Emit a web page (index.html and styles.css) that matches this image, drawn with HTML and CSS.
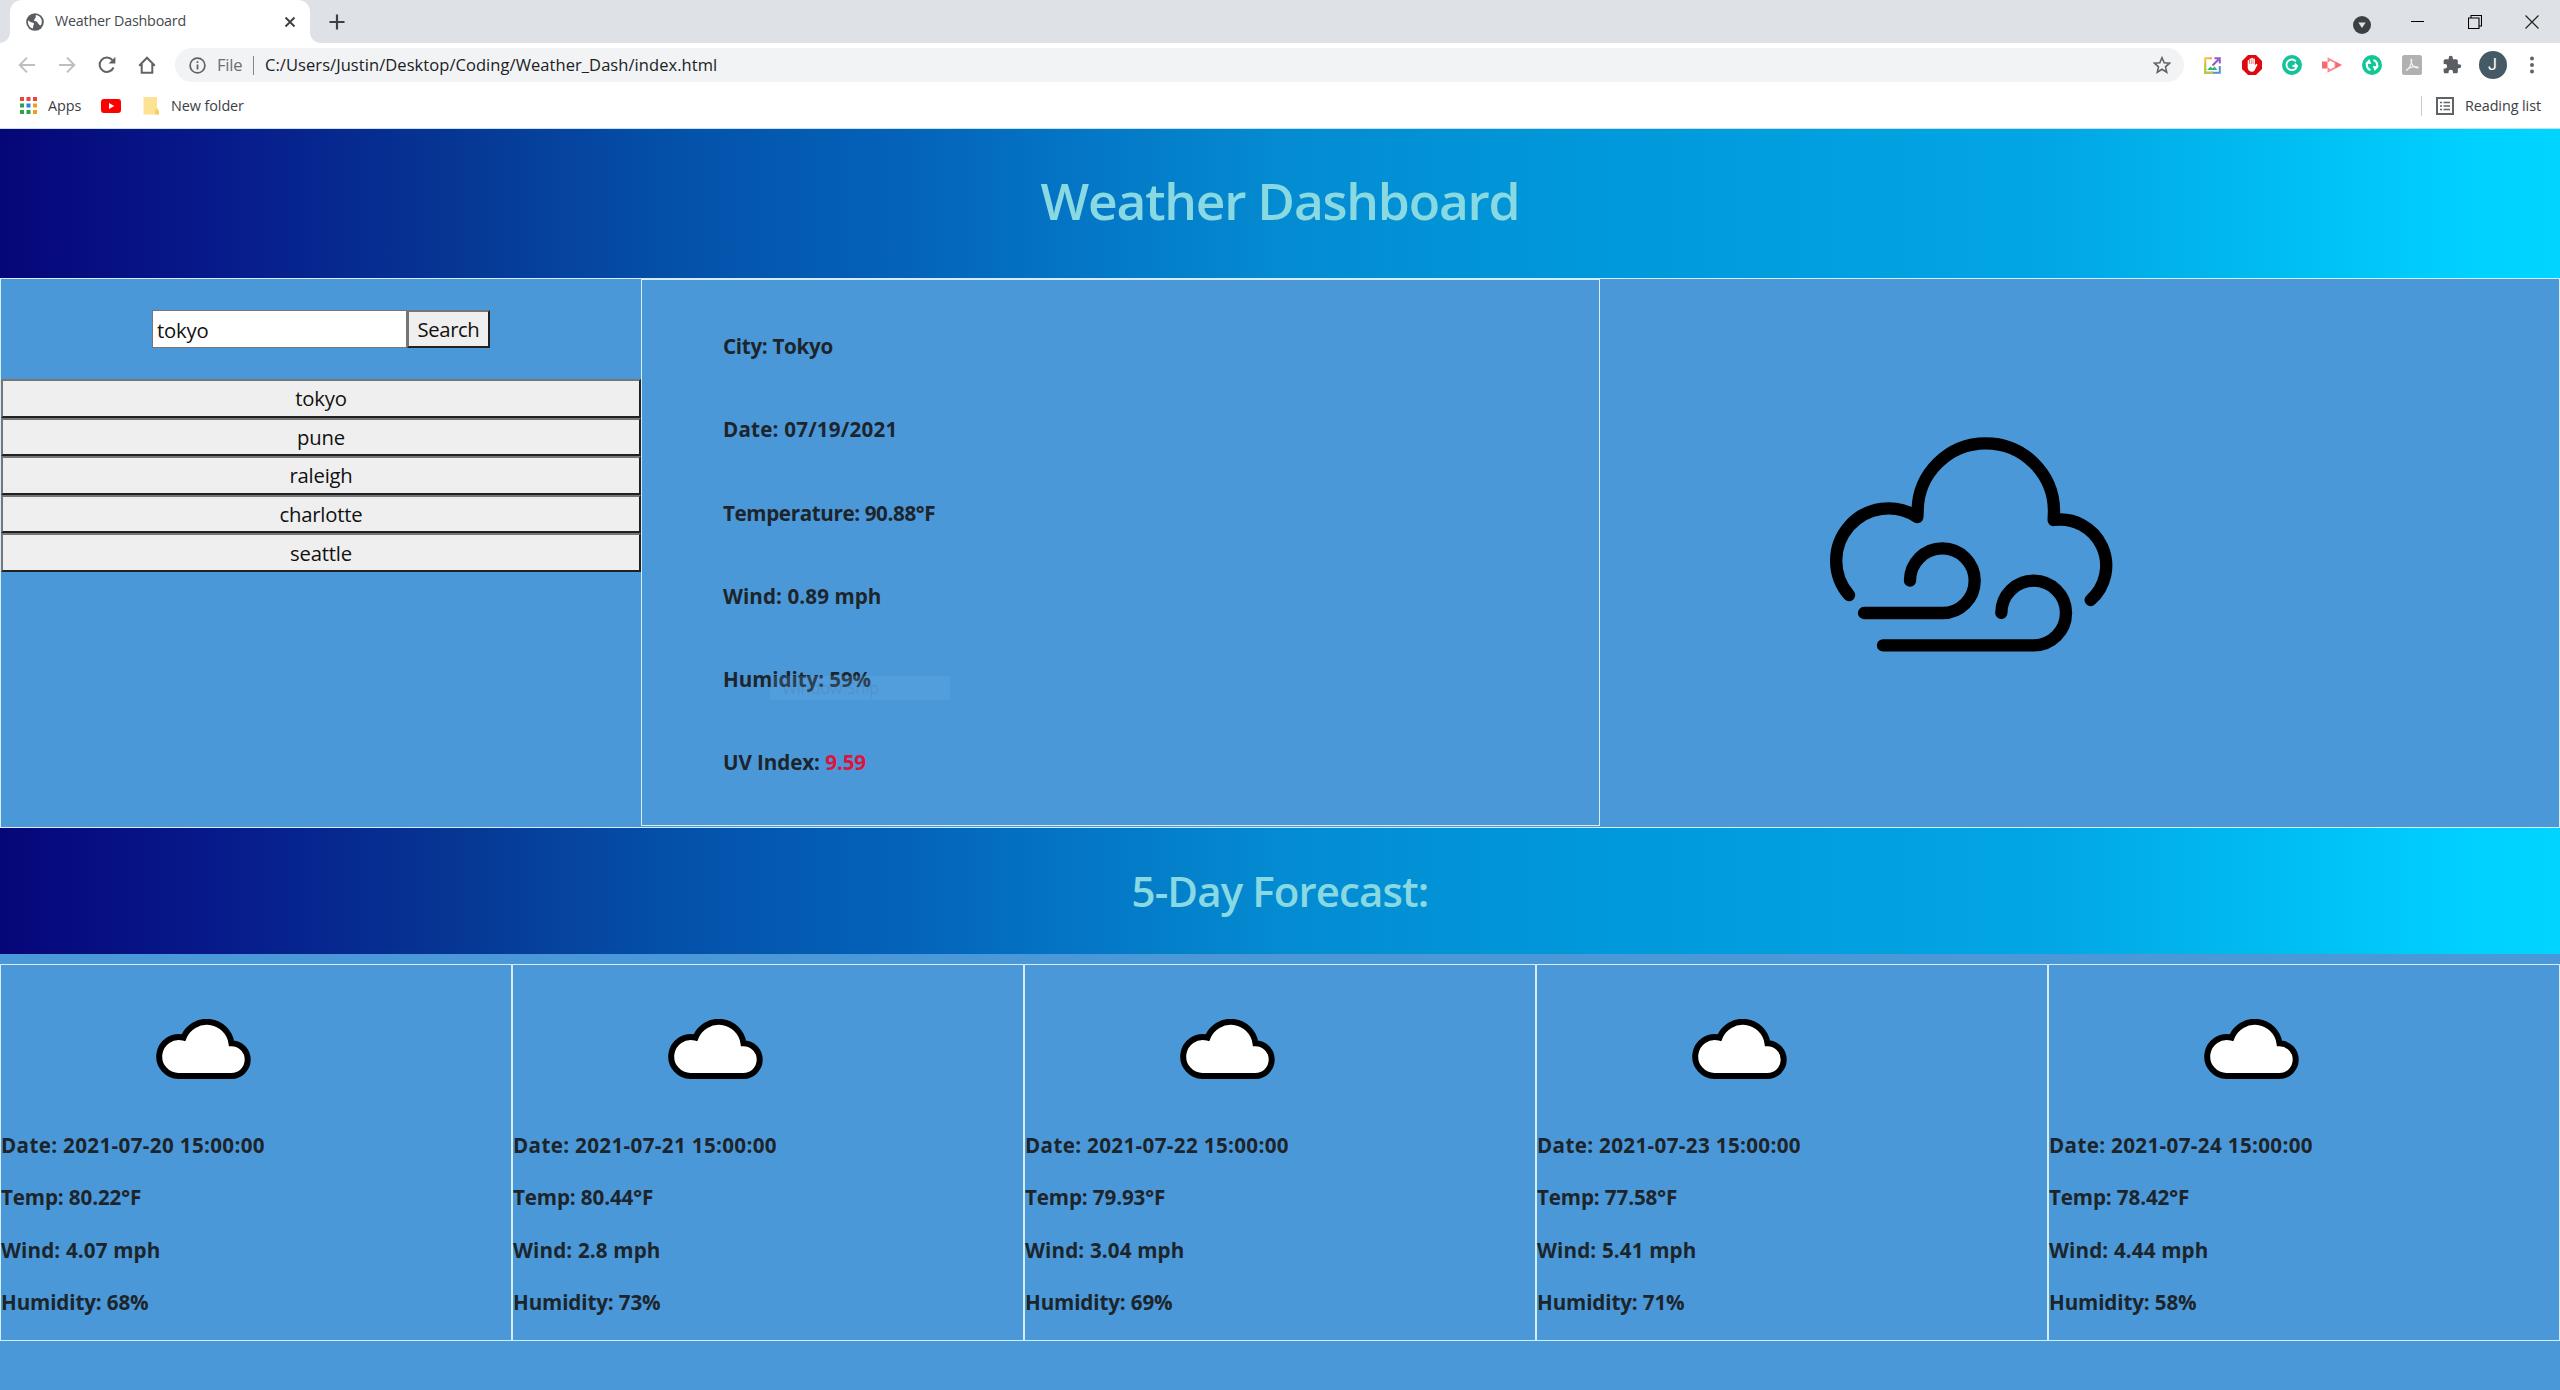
FILE: index.html
```html
<!DOCTYPE html>
<html lang="en">
<head>
<meta charset="utf-8">
<title>Weather Dashboard</title>
<link rel="stylesheet" href="styles.css">
</head>
<body>
<svg class="defs" width="0" height="0">
  <symbol id="cloud" viewBox="0 0 94 60">
    <path d="M22.500 57A19.500 19.500 0 1 1 27 18.600A25 25 0 0 1 75 24.300A16.300 16.300 0 0 1 74.700 57Z" fill="#fff" stroke="#000" stroke-width="6"/>
  </symbol>
</svg>

<div class="tabbar">
  <div class="tab">
    <svg class="globe" width="18" height="18" viewBox="0 0 18 18"><circle cx="9" cy="9" r="8.8" fill="#5a5d61"/><path d="M2 7.500C3.500 8 4.500 9.500 6 9.500C8 9.500 8.500 11 7.500 12C7 13 7.500 14.500 6.500 15.500C3.500 14.500 1.600 11.500 2 7.500ZM10 2C9 3 10.500 4.300 9.300 5.200C8 5.800 8.800 7.300 7.800 8C9.500 8.300 11 8 11.500 9.600C11.800 11 13 10.800 13.300 12C14 12.400 14.600 12.300 15 12.200C17.200 8 15 2.800 10 2Z" fill="#fff"/></svg>
    <span class="tab-title">Weather Dashboard</span>
    <svg class="tab-close" width="12" height="12" viewBox="0 0 12 12"><path d="M1.500 1.500L10.500 10.500M10.500 1.500L1.500 10.500" stroke="#3c4043" stroke-width="1.900"/></svg>
  </div>
  <svg class="plus" width="16" height="16" viewBox="0 0 16 16"><path d="M8 .5V15.500M.5 8H15.500" stroke="#3c4043" stroke-width="2.200"/></svg>
  <div class="window-controls">
    <div class="wc-cell wc-drop"><svg width="18" height="18" viewBox="0 0 18 18"><circle cx="9" cy="9" r="9" fill="#3c4043"/><path d="M5.300 6.500H12.700L9 12Z" fill="#dee1e6"/></svg></div>
    <div class="wc-cell"><svg width="13" height="13" viewBox="0 0 13 13"><path d="M0 6.500H13" stroke="#000" stroke-width="1"/></svg></div>
    <div class="wc-cell"><svg width="14" height="14" viewBox="0 0 14 14"><path d="M.5 3H11V13.500H.5ZM3 3V.5H13.500V11H11" fill="none" stroke="#000" stroke-width="1.100"/></svg></div>
    <div class="wc-cell"><svg width="14" height="14" viewBox="0 0 14 14"><path d="M.5 .5L13.500 13.500M13.500 .5L.5 13.500" stroke="#222" stroke-width="1.200"/></svg></div>
  </div>
</div>

<div class="toolbar">
  <div class="cell"><svg width="18" height="18" viewBox="0 0 18 18"><path d="M17 9H2M9 1.700L1.700 9L9 16.300" fill="none" stroke="#bcbec1" stroke-width="1.900"/></svg></div>
  <div class="cell"><svg width="18" height="18" viewBox="0 0 18 18"><path d="M1 9H16M9 1.700L16.300 9L9 16.300" fill="none" stroke="#bcbec1" stroke-width="1.900"/></svg></div>
  <div class="cell"><svg width="18" height="18" viewBox="0 0 18 18"><path d="M15.500 11.500A7.200 7.200 0 1 1 14.300 4" fill="none" stroke="#5f6368" stroke-width="2"/><path d="M17.400 .8V7.600H10.600Z" fill="#5f6368"/></svg></div>
  <div class="cell"><svg width="18" height="18" viewBox="0 0 18 18"><path d="M1.200 9.700L9 1.700L16.800 9.700M3.700 8V16.700H14.300V8" fill="none" stroke="#5f6368" stroke-width="2"/></svg></div>
  <div class="omnibox">
    <svg width="17" height="17" viewBox="0 0 17 17"><circle cx="8.500" cy="8.500" r="7.400" fill="none" stroke="#5f6368" stroke-width="1.700"/><path d="M8.500 7.600V12.500M8.500 4.300V6.100" stroke="#5f6368" stroke-width="1.800"/></svg>
    <span class="scheme">File</span>
    <span class="divider"></span>
    <span class="url">C:/Users/Justin/Desktop/Coding/Weather_Dash/index.html</span>
    <svg class="star" width="18" height="18" viewBox="0 0 18 18"><path d="M9 1.700L11.200 6.700L16.600 7.200L12.500 10.800L13.700 16.200L9 13.300L4.300 16.200L5.500 10.800L1.400 7.200L6.800 6.700Z" fill="none" stroke="#5f6368" stroke-width="1.600"/></svg>
  </div>
  <div class="ext">
    <div class="cell"><svg width="17" height="17" viewBox="0 0 17 17"><defs><linearGradient id="rb" x1="0" y1="0" x2="1" y2="1"><stop offset="0" stop-color="#f5c93a"/><stop offset=".4" stop-color="#e8855e"/><stop offset=".65" stop-color="#9a6ac8"/><stop offset="1" stop-color="#3b9be0"/></linearGradient></defs><path d="M8 1.200H1.200V15.800H15.800V9" fill="none" stroke="url(#rb)" stroke-width="2"/><path d="M1.200 7V15.800H9" fill="none" stroke="#b7cf3c" stroke-width="2"/><path d="M3 13L6.500 9.500L8.500 11.500L10.500 9.500L13.500 13Z" fill="#35b56a"/><path d="M8.500 8.500L14.500 2.500M10.500 1.200H15.800V6.500" fill="none" stroke="#8e5cc9" stroke-width="2"/></svg></div>
    <div class="cell"><svg width="20" height="20" viewBox="0 0 20 20"><path d="M6 0H14L20 6V14L14 20H6L0 14V6Z" fill="#e0080f"/><path d="M5.700 9.500V6A.9 .9 0 0 1 7.500 6V4.300A.9 .9 0 0 1 9.300 4.300V3.600A.9 .9 0 0 1 11.100 3.600V4.500A.9 .9 0 0 1 12.900 4.500V10.500L13.700 9.200A.9 .9 0 0 1 15.200 10.200L12.500 15.500Q11.500 16.700 10 16.700Q6.500 16.700 5.700 13Z" fill="#fff"/><path d="M7.500 5V9M9.300 4.500V9M11.100 4.500V9" stroke="#e0080f" stroke-width=".5"/></svg></div>
    <div class="cell"><svg width="20" height="20" viewBox="0 0 20 20"><circle cx="10" cy="10" r="10" fill="#15c39a"/><path d="M13.800 6.300A5.300 5.300 0 1 0 15 11H10.500M12.800 8.700L15 11L13.300 13.500" fill="none" stroke="#fff" stroke-width="1.800"/></svg></div>
    <div class="cell"><svg width="20" height="16" viewBox="0 0 20 16"><path d="M0 4.500H5.500V11.500H0Z" fill="#f46b6f"/><path d="M6.500 5V1.800L13.500 5.500V10.500L6.500 14.200V11" fill="none" stroke="#f88b8e" stroke-width="1.900"/><path d="M13.500 4.500L20 8L13.500 11.500Z" fill="#f46b6f"/></svg></div>
    <div class="cell"><svg width="20" height="20" viewBox="0 0 20 20"><circle cx="10" cy="10" r="10" fill="#11c795"/><path d="M8.500 15A5.300 5.300 0 0 1 5.500 7.200M11.500 5A5.300 5.300 0 0 1 14.500 12.800" fill="none" stroke="#fff" stroke-width="2.200"/><path d="M3.300 8.500L9.300 9L7.300 4ZM16.700 11.500L10.700 11L12.700 16Z" fill="#fff"/></svg></div>
    <div class="cell"><svg width="20" height="20" viewBox="0 0 20 20"><rect width="20" height="20" rx="2.500" fill="#b1b1b1"/><path d="M4 15.500C7 14.500 10.300 8.500 9.700 4.500C8.800 3.800 8.600 5.500 9.500 8C10.600 11 13.500 13.500 16.300 12.800C16 10.800 8.500 10.800 4 15.500Z" fill="none" stroke="#f2f2f2" stroke-width="1.100"/></svg></div>
    <div class="cell"><svg width="20" height="20" viewBox="0 0 24 24"><path d="M20.500 11H19V7c0-1.100-.9-2-2-2h-4V3.500a2.500 2.500 0 0 0-5 0V5H4c-1.100 0-2 .9-2 2v3.800h1.500a2.700 2.700 0 0 1 0 5.400H2V20c0 1.100.9 2 2 2h3.800v-1.500a2.700 2.700 0 0 1 5.400 0V22H17c1.100 0 2-.9 2-2v-4h1.500a2.500 2.500 0 0 0 0-5z" fill="#5a5d61"/></svg></div>
    <div class="cell avatar-cell"><span class="avatar">J</span></div>
    <div class="cell menu-cell"><svg width="6" height="18" viewBox="0 0 6 18"><g fill="#5f6368"><circle cx="3" cy="2.500" r="2"/><circle cx="3" cy="9" r="2"/><circle cx="3" cy="15.500" r="2"/></g></svg></div>
  </div>
</div>

<div class="bookmarks">
  <svg class="apps" width="17" height="17" viewBox="0 0 17 17"><g fill="#e8453c"><rect width="4" height="4"/><rect x="6.500" width="4" height="4"/><rect x="13" width="4" height="4"/></g><rect y="6.500" width="4" height="4" fill="#2ba24c"/><rect x="6.500" y="6.500" width="4" height="4" fill="#1e88e5"/><rect x="13" y="6.500" width="4" height="4" fill="#f29d1c"/><rect y="13" width="4" height="4" fill="#2ba24c"/><rect x="6.500" y="13" width="4" height="4" fill="#2ba24c"/><rect x="13" y="13" width="4" height="4" fill="#f29d1c"/></svg>
  <span class="bm-apps">Apps</span>
  <svg class="youtube" width="20" height="14" viewBox="0 0 20 14"><rect width="20" height="14" rx="3" fill="#f00"/><path d="M8 4L13.300 7L8 10Z" fill="#fff"/></svg>
  <svg class="folder" width="17" height="18" viewBox="0 0 17 18"><path d="M.5 0H14V13L16 17.500H.5Z" fill="#fde293"/><path d="M12 17.500V13.500L14 11L16 14V17.500Z" fill="#f4cf63"/></svg>
  <span class="bm-folder">New folder</span>
  <div class="reading">
    <svg width="18" height="18" viewBox="0 0 18 18"><rect x="1" y="1" width="16" height="16" fill="none" stroke="#5f6368" stroke-width="2"/><path d="M4 5.500H6M4 9H6M4 12.500H6M7.500 5.500H14M7.500 9H14M7.500 12.500H14" stroke="#5f6368" stroke-width="1.600"/></svg>
    <span>Reading list</span>
  </div>
</div>

<header class="banner title-banner"><h1>Weather Dashboard</h1></header>

<main class="overview">
  <section class="search-panel">
    <form class="search-form">
      <input class="search-input" type="text" value="tokyo">
      <button class="search-button" type="button">Search</button>
    </form>
    <div class="history">
      <button type="button">tokyo</button>
      <button type="button">pune</button>
      <button type="button">raleigh</button>
      <button type="button">charlotte</button>
      <button type="button">seattle</button>
    </div>
  </section>
  <section class="current">
    <p class="city">City: Tokyo</p>
    <p class="date">Date: 07/19/2021</p>
    <p class="temp">Temperature: 90.88°F</p>
    <p class="wind">Wind: 0.89 mph</p>
    <p>Humidity: 59%</p>
    <p>UV Index: <span class="uv">9.59</span></p>
    <div class="fading-tip">Window Snip</div>
  </section>
  <section class="current-icon">
    <svg width="400" height="280" viewBox="0 0 1200 840"><g fill="none" stroke="#000" stroke-width="37" stroke-linecap="round" stroke-linejoin="round"><path d="M210 585A157 157 0 0 1 415 351L416 334A204.500 204 0 0 1 825 334L824 360A138 138 0 0 1 935 600"/><path d="M255 639H490A97 97 0 1 0 393 542"/><path d="M312 736H764A97 97 0 1 0 667 639"/></g></svg>
  </section>
</main>

<div class="banner forecast-banner"><h2>5-Day Forecast:</h2></div>

<section class="forecast">
  <article class="card"><svg class="cloud"><use href="#cloud"/></svg><p class="date">Date: 2021-07-20 15:00:00</p><p>Temp: 80.22°F</p><p class="wind">Wind: 4.07 mph</p><p>Humidity: 68%</p></article>
  <article class="card"><svg class="cloud"><use href="#cloud"/></svg><p class="date">Date: 2021-07-21 15:00:00</p><p>Temp: 80.44°F</p><p class="wind">Wind: 2.8 mph</p><p>Humidity: 73%</p></article>
  <article class="card"><svg class="cloud"><use href="#cloud"/></svg><p class="date">Date: 2021-07-22 15:00:00</p><p>Temp: 79.93°F</p><p class="wind">Wind: 3.04 mph</p><p>Humidity: 69%</p></article>
  <article class="card"><svg class="cloud"><use href="#cloud"/></svg><p class="date">Date: 2021-07-23 15:00:00</p><p>Temp: 77.58°F</p><p class="wind">Wind: 5.41 mph</p><p>Humidity: 71%</p></article>
  <article class="card"><svg class="cloud"><use href="#cloud"/></svg><p class="date">Date: 2021-07-24 15:00:00</p><p>Temp: 78.42°F</p><p class="wind">Wind: 4.44 mph</p><p>Humidity: 58%</p></article>
</section>
</body>
</html>
```
FILE: styles.css
```css
* { box-sizing: border-box; }
body {
  margin: 0;
  width: 2560px;
  height: 1390px;
  overflow: hidden;
  background: #4b98d8;
  color: #1d252c;
  font-family: "Open Sans", "Noto Sans", sans-serif;
}
h1, h2, p { margin: 0; }
svg { display: block; flex: none; }
.defs { position: absolute; }

/* Browser chrome */
.tabbar {
  display: flex;
  align-items: center;
  height: 43px;
  background: #dee1e6;
}
.tab {
  position: relative;
  display: flex;
  align-items: center;
  width: 300px;
  height: 43px;
  margin-left: 10px;
  padding: 0 14px 0 16px;
  background: #fff;
  border-radius: 12px 12px 0 0;
}
.tab::before, .tab::after {
  content: "";
  position: absolute;
  bottom: 0;
  width: 10px;
  height: 10px;
}
.tab::before { left: -10px; background: radial-gradient(circle at 0 0, transparent 9.500px, #fff 10px); }
.tab::after { right: -10px; background: radial-gradient(circle at 100% 0, transparent 9.500px, #fff 10px); }
.tab-title {
  margin-left: 11px;
  padding-bottom: 1px;
  flex: 1;
  font-size: 14.300px;
  letter-spacing: -0.200px;
  line-height: 20px;
  color: #45494d;
}
.plus { margin-left: 19px; }
.window-controls { display: flex; margin-left: auto; height: 37px; }
.wc-cell { display: flex; align-items: center; justify-content: center; width: 57px; }
.wc-drop { width: 54px; padding-top: 6px; }

.toolbar { display: flex; align-items: center; height: 44px; padding-left: 7px; background: #fff; }
.cell { display: flex; align-items: center; justify-content: center; width: 40px; height: 44px; flex: none; }
.omnibox {
  display: flex;
  align-items: center;
  width: 2009px;
  height: 34px;
  margin-left: 8px;
  padding: 0 13px 0 14px;
  border-radius: 17px;
  background: #f1f3f4;
  font-size: 16.500px;
  line-height: 24px;
}
.scheme { margin-left: 11px; color: #6b6f74; width: 26px; letter-spacing: -0.200px; }
.divider { width: 1px; height: 19px; margin: 0 11px 0 10px; background: #80868b; }
.url { color: #202124; letter-spacing: 0.065px; }
.star { margin-left: auto; }
.ext { display: flex; margin-left: 8px; }
.avatar-cell { width: 41px; }
.menu-cell { width: 38px; }
.avatar {
  width: 28px;
  height: 28px;
  border-radius: 50%;
  background: #455a64;
  color: #fff;
  font-family: Roboto, sans-serif;
  font-size: 16px;
  line-height: 28px;
  text-align: center;
}

.bookmarks {
  display: flex;
  align-items: center;
  height: 42px;
  padding: 0 19px 4px 20px;
  background: #fff;
  border-bottom: 1px solid #c5e3f2;
  font-size: 14.400px;
  line-height: 20px;
  letter-spacing: -0.080px;
  color: #3c4043;
}
.bm-apps { width: 42px; margin-left: 11px; }
.youtube { margin-left: 11px; }
.folder { margin-left: 22px; }
.bm-folder { margin-left: 11px; }
.reading {
  display: flex;
  align-items: center;
  gap: 11px;
  height: 20px;
  margin-left: auto;
  padding-left: 14px;
  border-left: 1px solid #c8cacd;
}

/* Banners */
.banner {
  display: flex;
  justify-content: center;
  background: linear-gradient(90deg, #060678 0%, #07198a 8%, #063795 18%, #0450a9 26%, #0462b8 35%, #047bc8 44%, #048bd1 50%, #0098da 62%, #02a6e4 80%, #00bdf1 89%, #00d2ff 97%, #00d4ff 100%);
  color: #88d9e2;
}
.banner h1, .banner h2 { font-weight: 600; }
.title-banner { height: 149px; }
.title-banner h1 { margin-top: 36px; font-size: 51.500px; line-height: 70px; letter-spacing: -1.230px; }
.forecast-banner { height: 126px; }
.forecast-banner h2 { margin-top: 33px; font-size: 42px; line-height: 60px; letter-spacing: -0.880px; }

/* Current conditions */
.overview {
  display: grid;
  grid-template-columns: 640px 959px 1fr;
  height: 550px;
  border: 1px solid #d5ecf9;
}
.search-form { display: flex; justify-content: center; padding: 31px 0; }
.search-input, .search-button, .history button {
  margin: 0;
  border-radius: 0;
  font-family: inherit;
  font-size: 20.300px;
  letter-spacing: -0.200px;
  color: #111;
}
.search-input {
  width: 255px;
  height: 38px;
  padding: 1px 4px 0;
  border: 1px solid #767676;
  background: #fff;
  outline: 0;
}
.search-button {
  width: 83px;
  height: 38px;
  padding: 0;
  border: 2px solid;
  border-color: #767676 #212121 #212121 #767676;
  background: #efefef;
  letter-spacing: -0.400px;
}
.history { display: flex; flex-direction: column; }
.history button {
  height: 38.600px;
  padding: 0;
  border: 2px solid;
  border-color: #767676 #212121 #212121 #767676;
  background: #efefef;
}
.current {
  position: relative;
  height: 547px;
  padding: 25px 0 0 81px;
  border: 1px solid #d5ecf9;
}
.current p, .card p { font-size: 20.600px; font-weight: 700; }
.current p { line-height: 83.300px; letter-spacing: -0.080px; }
.current .city { letter-spacing: -0.300px; }
.current .date { letter-spacing: 0.200px; }
.current .temp { letter-spacing: -0.370px; }
.current .wind { letter-spacing: 0.080px; }
.uv { color: #dc143c; }
.fading-tip {
  position: absolute;
  left: 128px;
  top: 396px;
  width: 180px;
  height: 24px;
  padding-left: 12px;
  background: rgba(110, 180, 235, 0.200);
  color: rgba(30, 70, 110, 0.130);
  font-size: 16px;
  line-height: 24px;
}
.current-icon { padding: 121px 0 0 179px; }

/* Forecast */
.forecast { display: grid; grid-template-columns: repeat(5, 1fr); padding-top: 10px; }
.card { height: 377px; padding-left: 0; border: 1px solid #d5ecf9; }
.cloud { width: 95px; height: 60px; margin: 54px 0 40px 155px; }
.card p { line-height: 52.300px; letter-spacing: -0.120px; }
.card .date { letter-spacing: 0.350px; }
.card .wind { letter-spacing: 0.150px; }
```
